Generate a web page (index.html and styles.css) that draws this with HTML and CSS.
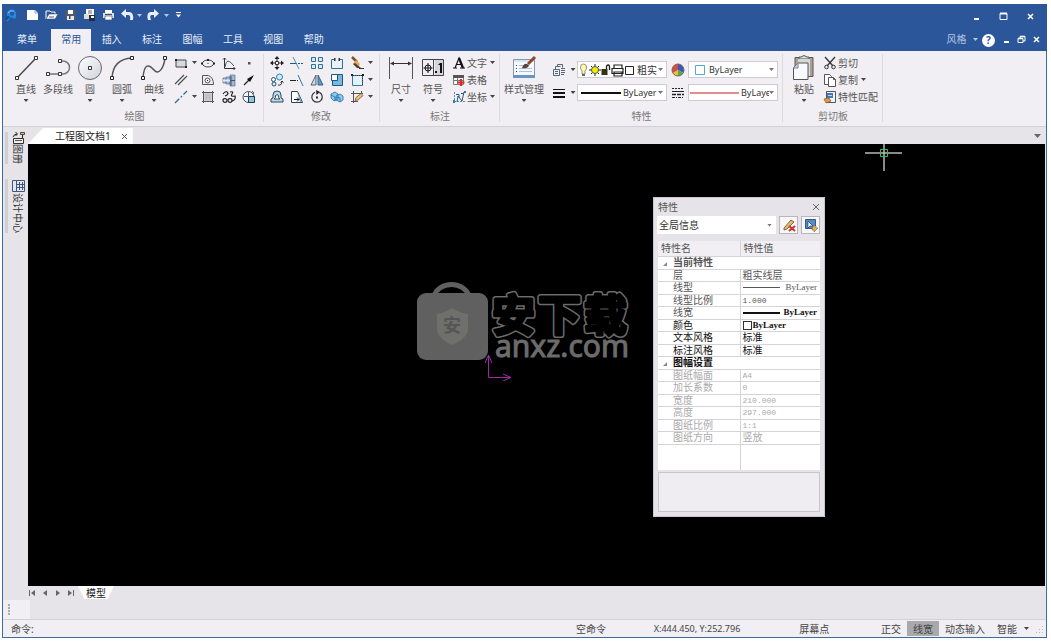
FILE: index.html
```html
<!DOCTYPE html>
<html lang="zh-CN">
<head>
<meta charset="utf-8">
<title>工程图文档1</title>
<link rel="stylesheet" href="styles.css">
</head>
<body>
<div class="window">
<header class="titlebar">
  <div class="title-row">
    <div class="quick">
      <svg class="app-logo" width="13" height="13" viewBox="0 0 13 13"><path d="M2 6a4.500 4.500 0 0 1 9-2v5a4.500 4.500 0 0 1-5-1L3 12H1l2-3z" fill="#2489df"/><circle cx="7" cy="4.500" r="2.200" fill="#2b579a"/><path d="M3 4q2-3 6-2" fill="none" stroke="#7fc9ff"/><path d="M1 9l3-2M1 11l4-3" stroke="#0b3f8d"/></svg>
      <button aria-label="新建"><svg width="13" height="12"><path d="M1 1h8l3 3v7H1z" fill="#fff"/><path d="M9 1v3h3" fill="none" stroke="#8fa2c0"/></svg></button>
      <button aria-label="打开"><svg width="13" height="12"><path d="M1 10V2h4l1 1h4v2" fill="none" stroke="#fff"/><path d="M1 10l3-5h9l-3 5z" fill="#fff" stroke="#39475f" stroke-width=".5"/><path d="M4 8h5" stroke="#557"/></svg></button>
      <button aria-label="保存"><svg width="13" height="12"><path d="M1.500 1h10v10h-10z" fill="#555b66"/><path d="M4 1h5v4H4z" fill="#fff"/><path d="M3 7h7v4H3z" fill="#e8e8e8"/><path d="M5 7h1.500v3H5z" fill="#444"/></svg></button>
      <button aria-label="打印预览"><svg width="13" height="12"><path d="M3 0h8v7H3z" fill="#fff"/><path d="M1 5h5v5H1z" fill="#ddd"/><path d="M5 2h4M5 4h4" stroke="#667"/><path d="M6 6h6v6H6z" fill="#222d40"/><path d="M8 7h3v2H8z" fill="#fff"/></svg></button>
      <button aria-label="打印"><svg width="13" height="12"><path d="M3 1h7v3H3z" fill="#fff"/><path d="M1 4h11v5H1z" fill="#d9dfea"/><path d="M3 7h7v4H3z" fill="#fff" stroke="#39475f" stroke-width=".6"/><path d="M3 5.500h7" stroke="#39475f"/></svg></button>
      <button aria-label="撤销"><svg width="14" height="12"><path d="M0 4.500L5 0v3h3q5 0 4 8H9q1-5-2-5H5v3z" fill="#e8eefb"/></svg></button>
      <svg class="mini" width="5" height="3"><path d="M0 0h5l-2.500 3z"/></svg>
      <button class="redo" aria-label="重做"><svg width="14" height="12"><path d="M13 4.500L8 0v3H5Q0 3 2 11h3Q3 6 6 6h2v3z" fill="#e8eefb"/></svg></button>
      <svg class="mini" width="5" height="3"><path d="M0 0h5l-2.500 3z"/></svg>
      <button aria-label="自定义快速访问栏" class="narrow"><svg width="5" height="6"><path d="M0 0h5v1H0zM0 2.500h5L2.500 5.500z" fill="#fff"/></svg></button>
    </div>
    <div class="win-buttons">
      <button aria-label="最小化"><svg width="9" height="9"><path d="M2 7h5" stroke="#fff" stroke-width="2"/></svg></button>
      <button aria-label="最大化"><svg width="9" height="9"><path d="M1 1.500h7v6H1z" fill="none" stroke="#fff"/><path d="M1 1.500h7" stroke="#fff" stroke-width="2"/></svg></button>
      <button aria-label="关闭"><svg width="9" height="9"><path d="M2 2l5 5M7 2l-5 5" stroke="#fff" stroke-width="1.500"/></svg></button>
    </div>
  </div>
  <div class="tab-row">
    <button class="file-tab">菜单</button>
    <nav class="tabs">
      <button class="active">常用</button><button>插入</button><button>标注</button><button>图幅</button><button>工具</button><button>视图</button><button>帮助</button>
    </nav>
    <div class="doc-buttons">
      <button class="style-btn">风格<svg class="mini" width="5" height="3"><path d="M0 0h5l-2.500 3z"/></svg></button>
      <button class="help" aria-label="帮助主题">?</button>
      <button aria-label="最小化文档"><svg width="9" height="9"><path d="M2 7h5" stroke="#fff" stroke-width="2"/></svg></button>
      <button aria-label="还原文档"><svg width="9" height="9" fill="none" stroke="#fff"><path d="M3 3V1.500h5V6H6"/><path d="M1 3.500h5v4H1z"/><path d="M3 1.500h5M1 3.500h5" stroke-width="1.600"/></svg></button>
      <button aria-label="关闭文档"><svg width="9" height="9"><path d="M2 2l5 5M7 2l-5 5" stroke="#fff" stroke-width="1.500"/></svg></button>
    </div>
  </div>
</header>

<section class="ribbon">
  <div class="group">
    <div class="group-body">
      <button class="big"><svg width="26" height="27" fill="none"><path d="M4 24L23 4" stroke="#4a4a4a" stroke-width="1.500"/><path d="M2.500 22.500h3v3h-3zM21.500 2.500h3v3h-3z" fill="#fff" stroke="#333"/></svg><span>直线</span><i class="arr"></i></button>
      <button class="big"><svg width="26" height="27" fill="none"><path d="M14 7h4a6.500 6.500 0 0 1 0 13H4" stroke="#777" stroke-width="1.500"/><path d="M1.500 18.500h3v3h-3zM13.500 18.500h3v3h-3zM13.500 5.500h3v3h-3z" fill="#fff" stroke="#333"/></svg><span>多段线</span></button>
      <button class="big"><svg width="26" height="27"><defs><linearGradient id="ball" x2="1" y2="1"><stop stop-color="#fff"/><stop offset="1" stop-color="#ccd3dc"/></linearGradient></defs><circle cx="13" cy="14" r="11.500" fill="url(#ball)" stroke="#666"/><path d="M11.500 12.500h3v3h-3z" fill="#fff" stroke="#333"/></svg><span>圆</span><i class="arr"></i></button>
      <button class="big"><svg width="26" height="27" fill="none"><path d="M3 24Q4 5 23 4" stroke="#555" stroke-width="1.500"/><path d="M1.500 22.500h3v3h-3zM21.500 2.500h3v3h-3z" fill="#fff" stroke="#222"/></svg><span>圆弧</span><i class="arr"></i></button>
      <button class="big"><svg width="26" height="27" fill="none"><path d="M2 24C3 9 8 10 13 16S23 13 24 4" stroke="#555" stroke-width="1.500"/><path d="M.5 22.500h3v3h-3zM22.500 2.500h3v3h-3z" fill="#fff" stroke="#222"/></svg><span>曲线</span><i class="arr"></i></button>
      <div class="icons draw-icons">
        <button aria-label="矩形"><svg width="14" height="14"><path d="M2 4h10v7H2z" fill="#d5dbe3" stroke="#444"/><path d="M1 3h2v2H1zM11 10h2v2h-2z" fill="#222"/></svg></button><i class="arr"></i>
        <button aria-label="椭圆"><svg width="14" height="14"><ellipse cx="7" cy="7.500" rx="5.500" ry="3.500" fill="#eef1f5" stroke="#444"/><path d="M6 3h2v2H6zM0 6.500h2v2H0zM12 6.500h2v2h-2zM6.500 7h1v1h-1z" fill="#222"/></svg></button>
        <button aria-label="坐标曲线"><svg width="14" height="14" fill="none"><path d="M2.500 2v10.500H13" stroke="#333"/><path d="M3 11q1-6 3-6 2 0 6 5" stroke="#456"/><path d="M1 3.500L2.500 2 4 3.500M11.500 11l1.500 1.500-1.500 1.500" stroke="#333"/></svg></button>
        <button aria-label="点"><svg width="14" height="14"><path d="M6 6h2.500v2.500H6z" fill="#555"/></svg></button>

        <button aria-label="平行线"><svg width="14" height="14"><path d="M1 11L10 2M4 12L13 3" stroke="#4b5058" stroke-width="1.200"/></svg></button><i></i>
        <button aria-label="轮廓"><svg width="14" height="14" fill="none"><path d="M1.500 2.500h6q5 2 5 9h-11z" stroke="#555"/><circle cx="6.500" cy="7.500" r="2.500" stroke="#555"/><path d="M6 7h1v1H6z" fill="#222"/></svg></button>
        <button aria-label="轴"><svg width="14" height="14"><path d="M1 5h3v5H1zM4 4h4v7H4zM8 2h5v11H8z" fill="#9db9d8" stroke="#5f7087" stroke-width=".7"/><path d="M1 7.500h7" stroke="#dfe9f3" stroke-width="2"/><path d="M8 7.500h5M9 3v10" stroke="#456"/></svg></button>
        <button aria-label="箭头"><svg width="14" height="14"><path d="M2 12l6-6" stroke="#222" stroke-width="1.300"/><path d="M12 2L5 6l3 3z" fill="#111"/></svg></button>

        <button aria-label="中心线"><svg width="14" height="14"><path d="M1 13L13 1" stroke="#25718f" stroke-width="1.300" stroke-dasharray="6 2 2 2"/></svg></button><i class="arr"></i>
        <button aria-label="填充"><svg width="14" height="14"><path d="M3 3h8v8H3z" fill="#dfe2e6"/><path d="M2.500 1v12M11.500 1v12M1 2.500h12M1 11.500h12" stroke="#555"/><path d="M5 3v8M7 3v8M9 3v8M3 5h8M3 7h8M3 9h8" stroke="#999" stroke-width=".5"/></svg></button>
        <button aria-label="波浪线"><svg width="14" height="14" fill="none" stroke="#222" stroke-width="1.200"><path d="M1 4q3-4 5-1 0 2-3 3M8 2q4-1 2 2t3 2q1 4-3 5"/><ellipse cx="3" cy="10.500" rx="2" ry="1.800"/><ellipse cx="8" cy="10.500" rx="2" ry="1.800"/></svg></button>
        <button aria-label="局部放大"><svg width="14" height="14"><circle cx="6.500" cy="7" r="5.500" fill="#f5f6fa" stroke="#456"/><path d="M6.500 6.500h6v6h-6z" fill="#8ec4e0" stroke="#234"/><path d="M6.500 2v4.500H2M10 1l2 2-2 1" fill="none" stroke="#456"/></svg></button>
      </div>
    </div>
    <div class="group-title">绘图</div>
  </div>

  <div class="group edit">
    <div class="group-body">
      <div class="icons edit-icons">
        <button aria-label="平移"><svg width="14" height="14"><path d="M7 1v12M1 7h12" stroke="#222"/><path d="M7 0l2.500 3h-5zM7 14l2.500-3h-5zM0 7l3-2.500v5zM14 7l-3-2.500v5z" fill="#222"/><path d="M5.500 5.500h3v3h-3z" fill="#fff" stroke="#333"/></svg></button>
        <button aria-label="裁剪"><svg width="14" height="14"><path d="M0 7.500h7" stroke="#258"/><path d="M8 7.500h6" stroke="#258" stroke-dasharray="2 1"/><path d="M3 1l6 12" stroke="#4b8ab8"/></svg></button>
        <button aria-label="阵列"><svg width="14" height="14" fill="#d4ebfa" stroke="#2f7096"><path d="M1.500 1.500h4v4h-4zM8.500 1.500h4v4h-4zM1.500 8.500h4v4h-4zM8.500 8.500h4v4h-4z"/></svg></button>
        <button aria-label="拉伸"><svg width="14" height="14"><path d="M1.500 3.500h11v9h-11z" fill="#e8f2f9" stroke="#2f7096"/><path d="M5 3.500h4" stroke="#f1eff3" stroke-width="2"/><path d="M4 2h1.500v3H4zM8.500 2H10v3H8.500z" fill="#333"/></svg></button>
        <button aria-label="删除"><svg width="14" height="14"><path d="M2 1l5 5" stroke="#7d5130" stroke-width="2.500"/><path d="M6 4l4 4-2 3-5-3z" fill="#e9a552"/><path d="M5 7l6 5H7L3 8z" fill="#50402f"/><path d="M9 12.500h5" stroke="#333"/></svg></button>
        <i class="arr"></i>

        <button aria-label="复制对象"><svg width="14" height="14"><circle cx="9.500" cy="4" r="3" fill="#d4ebfa" stroke="#2f80b6"/><circle cx="3.500" cy="6.500" r="2" fill="#fff" stroke="#257"/><circle cx="4" cy="11" r="2" fill="#d4ebfa" stroke="#257"/><path d="M8 12q4 1 4-4M10.500 9.500L12 8l1.500 1.500" fill="none" stroke="#333"/></svg></button>
        <button aria-label="延伸"><svg width="14" height="14"><path d="M0 7.500h5" stroke="#222"/><path d="M5 7.500h4" stroke="#222" stroke-dasharray="1 1"/><path d="M8 2l5 11" stroke="#36759f"/></svg></button>
        <button aria-label="镜像"><svg width="14" height="14"><path d="M6 2v10H1z" fill="#cfd9e2" stroke="#345" stroke-width=".8"/><path d="M8 2v10h5z" fill="#4ba3dc" stroke="#345" stroke-width=".8"/></svg></button>
        <button aria-label="缩放"><svg width="14" height="14"><path d="M2.500 1.500h10v11h-10z" fill="#76b9e6" stroke="#257"/><path d="M1.500 1.500h6v6h-6z" fill="#fff" stroke="#257"/></svg></button>
        <button aria-label="打断"><svg width="14" height="14"><path d="M2.500 2.500h10v10h-10z" fill="#e5f1f8" stroke="#357a9f"/><path d="M3 2.500h9M12.500 3v9" stroke="#333" stroke-dasharray="1 1"/><path d="M1 1h2v2H1zM12 1h2v2h-2z" fill="#222"/></svg></button>
        <i class="arr"></i>

        <button aria-label="偏移"><svg width="14" height="14"><path d="M1 12V9q3 0 2-4a4 4 0 0 1 8 0q-1 4 2 4v3z" fill="#b8dcf2" stroke="#345"/><path d="M4 9q2-1 1.500-3.500a2 2 0 0 1 3 0Q8 8 10 9z" fill="#fff" stroke="#345"/></svg></button>
        <button aria-label="拔模"><svg width="14" height="14"><path d="M1.500 1.500h6l5 11h-11z" fill="#fff" stroke="#345"/><path d="M7 2l5 10h-2z" fill="#58b0e8"/><path d="M4 9.500h5M7 7.500l2 2-2 2" fill="none" stroke="#111"/></svg></button>
        <button aria-label="旋转"><svg width="14" height="14"><path d="M5 2.200a5.200 5.200 0 1 0 4.500.2" fill="none" stroke="#333" stroke-width="1.200"/><path d="M6 0l4 2-3.500 3z" fill="#222"/><path d="M6 6.500h2v2H6z" fill="#222"/></svg></button>
        <button aria-label="分解"><svg width="14" height="14" fill="#8ccaf2" stroke="#246d9d" stroke-width=".8"><path d="M1 4l4-2 3 2v5l-4 2-3-3zM6 6l4-2 3 2v4l-3 2-4-2zM1 5l4 2v4M6 7l4 1v4"/></svg></button>
        <button aria-label="编辑"><svg width="14" height="14"><path d="M3.500 1v12M1 3.500h12M11.500 1v6M1 11.500h7" stroke="#555"/><path d="M5 10.500l1-3 5-4 2 2-5 4.500z" fill="#f0c26d" stroke="#754" stroke-width=".8"/></svg></button>
        <i class="arr"></i>
      </div>
    </div>
    <div class="group-title">修改</div>
  </div>

  <div class="group">
    <div class="group-body">
      <button class="big"><svg width="26" height="27" fill="none"><path d="M1.500 3v22M24.500 3v22" stroke="#555"/><path d="M3 9.500h20" stroke="#333"/><path d="M2 9.500l4-2v4zM24 9.500l-4-2v4z" fill="#333"/></svg><span>尺寸</span><i class="arr"></i></button>
      <button class="big"><svg width="26" height="27" fill="none"><path d="M15 6h9v16h-9z" fill="#d4d6da"/><path d="M2.500 5.500h21v16h-21zM13.500 6v16" stroke="#444"/><circle cx="8" cy="14" r="3" stroke="#111"/><path d="M8 9v10M3.500 14h9" stroke="#111"/><path d="M15 17h2v2h-2zM20 9h2v10h-2zM18 11l2-2h1v2z" fill="#111"/></svg><span>符号</span><i class="arr"></i></button>
      <div class="list">
        <button><svg width="14" height="14"><path d="M1 12h4M8 12h5M3 12L7 2l4 10M4.500 8.500h5" fill="none" stroke="#111" stroke-width="1.200"/><path d="M7 2l4 10" stroke="#111" stroke-width="2.200"/></svg>文字<i class="arr"></i></button>
        <button><svg width="14" height="14"><path d="M1.500 2.500h10v9h-10zM1 7.500h11M5.500 4v8" fill="#fff" stroke="#777"/><path d="M1 2h11v3H1z" fill="#555"/><path d="M9 6v7M5.500 9.500h7" stroke="#d52b2b" stroke-width="2.200"/></svg>表格</button>
        <button><svg width="14" height="14"><path d="M2.500 2v9.500H13" fill="none" stroke="#4a93bd" stroke-dasharray="2 1"/><path d="M5 12l1-6 4 5 2-9M4 4.500h3v3M9 3.500h3" fill="none" stroke="#357"/><path d="M1 10h2v3H1zM12 1h2v2h-2z" fill="#267db4"/></svg>坐标<i class="arr"></i></button>
      </div>
    </div>
    <div class="group-title">标注</div>
  </div>

  <div class="group">
    <div class="group-body">
      <button class="big wide"><svg width="28" height="27"><path d="M3.500 5.500h21v18h-21z" fill="#f5f8fc" stroke="#8a96a5"/><path d="M3 21h22v3H3z" fill="#6795c8"/><path d="M4 6h20v2H4z" fill="#d6e4f3"/><path d="M9 11.500h8M9 14.500h13M9 17.500h13" stroke="#a9c3df"/><path d="M6 11.500h1M6 14.500h1M6 17.500h1" stroke="#346"/><path d="M12 14q2-5 5-4l2 1q-1 4-7 3z" fill="#594339"/><path d="M18 10l7-7" stroke="#8b4b28" stroke-width="3"/></svg><span>样式管理</span><i class="arr"></i></button>
      <div class="props">
        <div class="prop-row">
          <button class="drop" aria-label="图层"><svg width="14" height="14" fill="#eef2f7" stroke="#567"><path d="M5.500 3.500v-2h5v3M3.500 6.500v-3h5"/><path d="M1.500 6.500h6v6h-6z"/><path d="M3 8.500h3M3 10.500h3M9 5.500h4M9 7.500h4M9 9.500h4M9 11.500h3"/></svg><i class="arr"></i></button>
          <div class="combo">
            <svg width="57" height="14"><path d="M4 8Q2 6 2.500 4a3 3 0 0 1 6 0Q9 6 7 8v3H4z" fill="#fff8a8" stroke="#777" stroke-width=".8"/><path d="M4 11h3v2H4z" fill="#665"/><path d="M17 1v12M11 7h12M13 3l8 8M21 3l-8 8" stroke="#222"/><circle cx="17" cy="7" r="3.500" fill="#f4f000" stroke="#555"/><path d="M23.500 6h6v6h-6z" fill="#333311"/><path d="M28.500 6V3q2-2 3 0v4" fill="none" stroke="#222" stroke-width="1.300"/><path d="M36 5V2h8v3M34 5.500h11v5H34zM36 9h8v4h-8z" fill="#fff" stroke="#222" stroke-width="1.200"/><path d="M47.500 3.500h8v8h-8z" fill="#fff" stroke="#222"/></svg>
            <select aria-label="当前图层"><option>粗实</option></select><i class="arr"></i>
          </div>
          <button class="single" aria-label="颜色"><svg width="14" height="14"><path d="M7 7V1a6 6 0 0 1 5.200 9z" fill="#3c55c0"/><path d="M7 7l5.200 3a6 6 0 0 1-10.400 0z" fill="#e6c42a"/><path d="M7 7l-5.200 3A6 6 0 0 1 7 1z" fill="#da4c42"/><path d="M7 7v6a6 6 0 0 0 5.200-3z" fill="#4fa95a"/><circle cx="7" cy="7" r="6" fill="none" stroke="#765"/></svg></button>
          <div class="combo">
            <svg width="18" height="14"><path d="M6.500 2.500h9v9h-9z" fill="#fff" stroke="#55a6dc"/></svg>
            <select class="latin" aria-label="当前颜色"><option>ByLayer</option></select><i class="arr"></i>
          </div>
        </div>
        <div class="prop-row">
          <button class="drop" aria-label="线宽"><svg width="14" height="14"><path d="M1 3.500h12" stroke="#111"/><path d="M1 7h12" stroke="#111" stroke-width="2"/><path d="M1 11h12" stroke="#111" stroke-width="2"/></svg><i class="arr"></i></button>
          <div class="combo">
            <svg width="43" height="14"><path d="M3 7h40" stroke="#111" stroke-width="2"/></svg>
            <select class="latin" aria-label="当前线宽"><option>ByLayer</option></select><i class="arr"></i>
          </div>
          <button class="single" aria-label="线型"><svg width="14" height="14" stroke="#222"><path d="M1 2.500h12" stroke-dasharray="2 1"/><path d="M1 5.500h12"/><path d="M1 8.500h12" stroke-dasharray="4 1" stroke-width="1.500"/><path d="M1 11.500h12" stroke-dasharray="3 1 1 1"/></svg></button>
          <div class="combo">
            <svg width="50" height="14"><path d="M1 7h49" stroke="#e58a8e" stroke-width="2"/></svg>
            <select class="latin" aria-label="当前线型"><option>ByLayer</option></select><i class="arr"></i>
          </div>
        </div>
      </div>
    </div>
    <div class="group-title">特性</div>
  </div>

  <div class="group">
    <div class="group-body">
      <button class="big"><svg width="26" height="27"><path d="M4 3.500h18v19H4z" fill="#aaa098" stroke="#5d5650"/><path d="M8 5V3h2q3-3 6 0h2v2z" fill="#ddd" stroke="#555"/><path d="M7 5h12v17H7z" fill="#d7d7d7"/><path d="M7 9h10v16.500H2.500V14z" fill="#f7f9fc" stroke="#555"/><path d="M7 9v5H3" fill="#cbd5e3" stroke="#789"/></svg><span>粘贴</span><i class="arr"></i></button>
      <div class="list">
        <button><svg width="14" height="14" fill="none" stroke="#333"><path d="M2 1l8 9M12 1L4 10" stroke-width="1.300"/><circle cx="3.500" cy="11" r="1.800"/><circle cx="10.500" cy="11" r="1.800"/></svg>剪切</button>
        <button><svg width="14" height="14" fill="#fff" stroke="#555"><path d="M1.500 1.500h5l2 2v8h-7z"/><path d="M5.500 4.500h5l2 2v7h-7zM10.500 4.500v2h2"/></svg>复制<i class="arr"></i></button>
        <button><svg width="14" height="14"><path d="M3.500 1.500h9v11h-9z" fill="#eef3f8" stroke="#555"/><path d="M4 3h6v5H4z" fill="#3f78bd"/><path d="M5 5.500h4" stroke="#bfd5ee"/><path d="M1 9l5-1 2 3-5 2z" fill="#e59a40" stroke="#8c5628" stroke-width=".7"/></svg>特性匹配</button>
      </div>
    </div>
    <div class="group-title">剪切板</div>
  </div>
</section>

<main class="workspace">
  <aside class="dock">
    <button><svg width="13" height="12"><path d="M1.500 6.500h10v5h-10z" fill="#eee" stroke="#333"/><path d="M3 8.500h7" stroke="#555"/><path d="M1 5q1-3 4-3M3.500 0l2 2-2 2M10.500 2v4" fill="none" stroke="#222"/><path d="M8.500.500h4v2h-4z" fill="#ddd46b" stroke="#444"/></svg><span>图册</span></button>
    <button><svg width="13" height="14"><path d="M.5 1.500h12v11H.5z" fill="#dfe7f4" stroke="#44577b"/><path d="M4.500 1v12M7.500 3v8M10.500 3v8M5 5.500h7M5 8.500h7" stroke="#44577b"/></svg><span>设计中心</span></button>
  </aside>
  <div class="document">
    <div class="doc-tabs">
      <div class="doc-tab"><span>工程图文档1</span><button aria-label="关闭工程图文档1"><svg width="7" height="7"><path d="M1 1l5 5M6 1L1 6" stroke="#555"/></svg></button></div>
      <button class="more" aria-label="文档列表"><i class="arr large"></i></button>
    </div>
    <div class="canvas">
      <svg class="cross" width="39" height="28" fill="none"><path d="M1 9h37" stroke="#b8b8b8" stroke-width="1.500"/><path d="M20 0v27" stroke="#b8b8b8" stroke-width="1.500"/><path d="M16.500 5.500h7v7h-7z" stroke="#2fbd70"/></svg>
      <svg class="watermark" width="230" height="96">
        <path d="M19 20a18 15 0 0 1 35 0" fill="none" stroke="#606060" stroke-width="5"/>
        <rect x="2" y="17" width="71" height="67" rx="9" fill="#606060"/>
        <path d="M37 32q7 5 16 6v15q0 9-16 16Q22 62 22 53V38q8-1 15-6z" fill="#6f6f6c"/>
        <text class="wm-badge" x="37" y="56">安</text>
        <g class="wm-outline"><text id="wm-name" class="wm-name" y="55" x="77 123 169">安下载</text></g>
        <use class="wm-core" href="#wm-name"/>
        <text class="wm-site" x="80" y="81">anxz.com</text>
      </svg>
      <svg class="axis" width="28" height="28"><path d="M3.500 2v22.500H26M0 10l3.500-8L7 10M18 21l8 3.500-8 3.500" fill="none" stroke="#a028a8"/></svg>

      <section class="panel">
        <div class="panel-head"><h2>特性</h2><button aria-label="关闭特性"><svg width="8" height="8"><path d="M1 1l6 6M7 1L1 7" stroke="#666"/></svg></button></div>
        <div class="panel-tools">
          <div class="panel-combo"><select aria-label="信息范围"><option>全局信息</option></select><i class="arr"></i></div>
          <button class="tool" aria-label="清除选择"><svg width="14" height="14"><path d="M2 10L9 2l3 2-7 7-3 1z" fill="#edb75e" stroke="#765"/><path d="M7 8l6 5M13 8l-6 5" stroke="#c8342d" stroke-width="2"/></svg></button>
          <button class="tool" aria-label="快速选择"><svg width="14" height="14"><path d="M1.500 1.500h10v9h-10z" fill="#4a8fd0" stroke="#456"/><path d="M4 3l5 5H6l-2 2z" fill="#fff" stroke="#124" stroke-width=".6"/><path d="M9 8h3v2h2l-4 4v-2H8z" fill="#e6b44d" stroke="#865" stroke-width=".6"/></svg></button>
        </div>
        <table class="grid">
          <thead><tr><th>特性名</th><th>特性值</th></tr></thead>
          <tbody>
            <tr class="cat"><td colspan="2"><i class="fold"></i>当前特性</td></tr>
            <tr><td>层</td><td>粗实线层</td></tr>
            <tr><td>线型</td><td><span class="sample"><i></i>ByLayer</span></td></tr>
            <tr><td>线型比例</td><td class="num">1.000</td></tr>
            <tr><td>线宽</td><td><span class="sample heavy"><i></i>ByLayer</span></td></tr>
            <tr class="dark"><td>颜色</td><td><span class="swatch"><i></i>ByLayer</span></td></tr>
            <tr class="dark"><td>文本风格</td><td>标准</td></tr>
            <tr class="dark"><td>标注风格</td><td>标准</td></tr>
            <tr class="cat strong"><td colspan="2"><i class="fold"></i>图幅设置</td></tr>
            <tr class="off"><td>图纸幅面</td><td class="num">A4</td></tr>
            <tr class="off"><td>加长系数</td><td class="num">0</td></tr>
            <tr class="off"><td>宽度</td><td class="num">210.000</td></tr>
            <tr class="off"><td>高度</td><td class="num">297.000</td></tr>
            <tr class="off"><td>图纸比例</td><td class="num">1:1</td></tr>
            <tr class="off"><td>图纸方向</td><td>竖放</td></tr>
            <tr class="blank"><td></td><td></td></tr>
          </tbody>
        </table>
        <div class="panel-note"></div>
      </section>
    </div>
    <div class="sheet-tabs">
      <button aria-label="第一页"><svg width="6" height="6"><path d="M0 0h1v6H0zM6 0v6L2 3z"/></svg></button>
      <button aria-label="上一页"><svg width="6" height="6"><path d="M5 0v6L1 3z"/></svg></button>
      <button aria-label="下一页"><svg width="6" height="6"><path d="M1 0v6l4-3z"/></svg></button>
      <button aria-label="最后一页"><svg width="6" height="6"><path d="M5 0h1v6H5zM0 0v6l4-3z"/></svg></button>
      <button class="model">模型</button>
    </div>
  </div>
</main>
<div class="command"><div class="grip"><svg width="2" height="12" fill="#aaa"><path d="M0 0h2v2H0zM0 3h2v2H0zM0 6h2v2H0zM0 9h2v2H0z"/></svg></div></div>
<footer class="status">
  <span class="prompt">命令:</span>
  <span class="idle">空命令</span>
  <span class="coords latin">X:444.450, Y:252.796</span>
  <span class="snap">屏幕点</span>
  <button>正交</button><button class="on">线宽</button><button>动态输入</button><button>智能<i class="arr"></i></button>
  <svg class="resize" width="9" height="9" fill="#bbb"><path d="M6 0h1v1H6zM3 3h1v1H3zM6 3h1v1H6zM0 6h1v1H0zM3 6h1v1H3zM6 6h1v1H6z"/></svg>
</footer>
</div>
</body>
</html>
```
FILE: styles.css
```css
* { box-sizing: border-box; }
html, body { height: 100%; }
body {
  margin: 0;
  padding: 4px 4px 5px 2px;
  background: #fff;
  color: #555;
  font: 10px/12px "Noto Sans", "Noto Sans CJK SC", sans-serif;
}
button, select {
  margin: 0;
  padding: 0;
  border: 0;
  background: none;
  color: inherit;
  font: inherit;
}
button { display: flex; align-items: center; justify-content: center; white-space: nowrap; }
svg { display: block; flex: none; }

.window {
  display: flex;
  flex-direction: column;
  height: 100%;
  border: 1px solid #3a6ea0;
  border-top: 0;
  background: #e6e4e8;
}
.latin { font-size: 9px; }
.arr {
  flex: none;
  width: 5px;
  height: 3px;
  background: #444;
  clip-path: polygon(0 0, 100% 0, 50% 100%);
}
.arr.large { width: 7px; height: 4px; background: #666; }
.mini { fill: #b8c8e4; }

.titlebar { background: #2b579a; color: #e8eefb; margin: 0 -1px; padding: 0 1px; }
.title-row, .tab-row { display: flex; justify-content: space-between; }
.title-row { height: 25px; }
.quick { display: flex; align-items: center; height: 22px; padding-left: 2px; }
.quick .app-logo { margin-right: 5px; }
.quick button { width: 19px; height: 20px; }
.quick .redo { width: 22px; }
.quick .narrow { width: 18px; }
.win-buttons { display: flex; align-items: center; padding-right: 2px; }
.win-buttons button { width: 27px; height: 24px; }
.tab-row { height: 22px; }
.tab-row button { height: 22px; padding-bottom: 2px; }
.file-tab { width: 48px; }
.tabs { display: grid; grid-template-columns: repeat(7, 1fr); width: 283px; }
.tabs .active { background: #f1eff3; color: #2b579a; }
.doc-buttons { display: flex; align-items: center; margin-left: auto; padding-right: 2px; }
.doc-buttons button { width: 15px; }
.doc-buttons .style-btn { width: 32px; gap: 6px; color: #b3c4e2; }
.doc-buttons .help {
  width: 13px;
  height: 13px;
  margin: 0 4px;
  padding: 0;
  border-radius: 50%;
  background: #fff;
  color: #2b579a;
  font-weight: 700;
}

.ribbon {
  display: flex;
  padding: 3px 3px 4px 2px;
  border-bottom: 1px solid #d2d0d5;
  background: #f1eff3;
}
.group { border-right: 1px solid #dcdadf; padding: 0 4px 0 5px; }
.group.edit { padding-left: 3px; }
.group-body { display: flex; height: 55px; }
.group-title { padding-top: 1px; text-align: center; color: #777; }
.big {
  flex-direction: column;
  justify-content: flex-start;
  width: 32px;
  height: 52px;
}
.big span { margin-top: 2px; }
.big .arr { margin-top: 4px; }
.big.wide { width: 38px; }
.icons { display: grid; grid-auto-rows: 17px; align-items: center; }
.icons button { height: 17px; }
.draw-icons { grid-template-columns: 20px 6px 22px 20px 20px; padding-left: 1px; }
.edit-icons { grid-template-columns: repeat(5, 20px) 8px; }
.icons .arr { margin-left: 1px; }
.list { display: flex; flex-direction: column; padding-left: 3px; }
.list button { justify-content: flex-start; height: 17px; gap: 1px; }
.list .arr { margin-left: 2px; }
.props { display: flex; flex-direction: column; gap: 6px; padding: 7px 0 0 7px; }
.prop-row { display: flex; align-items: center; }
.drop { width: 27px; gap: 5px; }
.drop, .single { height: 17px; }
.single { width: 21px; }
.combo, .panel-combo {
  display: flex;
  align-items: center;
  padding-right: 3px;
  background: #fff;
}
.combo { width: 90px; height: 17px; border: 1px solid #cdcbd0; }
.combo select, .panel-combo select {
  flex: 1;
  min-width: 0;
  appearance: none;
  padding-left: 2px;
  overflow: hidden;
  color: #333;
}
.combo .arr, .panel-combo .arr { background: #777; pointer-events: none; }

.workspace { display: flex; flex: 1; min-height: 0; }
.dock { display: flex; flex-direction: column; gap: 15px; width: 25px; padding: 5px 0 0 2px; }
.dock button {
  flex-direction: column;
  justify-content: flex-start;
  width: 21px;
  padding-left: 2px;
  border-left: 3px solid #d0cfd4;
}
.dock span { writing-mode: vertical-rl; text-orientation: sideways; color: #333; }
.document { display: flex; flex: 1; flex-direction: column; min-width: 0; padding-right: 1px; }
.doc-tabs { display: flex; justify-content: space-between; height: 17px; padding-top: 1px; }
.doc-tab {
  display: flex;
  align-items: center;
  gap: 10px;
  height: 16px;
  padding: 0 5px 0 27px;
  background: #fff;
  clip-path: polygon(15px 0, 100% 0, 100% 100%, 0 100%);
  color: #222;
}
.more { padding: 0 4px; }

.canvas { position: relative; flex: 1; background: #000; }
.cross { position: absolute; left: 836px; top: 0; }
.watermark { position: absolute; left: 387px; top: 132px; }
.wm-badge { fill: #555; font-size: 18px; font-weight: 700; text-anchor: middle; }
.wm-name { font: 700 43px "Noto Sans CJK SC", sans-serif; stroke-linejoin: round; }
.wm-outline { fill: #6c6c6c; stroke: #6c6c6c; stroke-width: 6px; }
.wm-core { fill: #000; stroke: #000; stroke-width: 3px; }
.wm-site { fill: #6c6c6c; stroke: #6c6c6c; stroke-width: 1px; font: 30px "Noto Sans", sans-serif; }
.axis { position: absolute; left: 457px; top: 209px; }

.panel {
  position: absolute;
  left: 625px;
  top: 53px;
  width: 172px;
  padding: 0 4px 4px;
  border: 1px solid #c8c6ca;
  background: #e6e4e8;
}
.panel-head { display: flex; align-items: center; justify-content: space-between; height: 18px; }
.panel-head h2 { margin: 0; font-size: 10px; font-weight: 400; }
.panel-tools { display: flex; gap: 3px; margin-bottom: 7px; }
.panel-combo { flex: 1; height: 18px; padding-right: 4px; margin-left: -1px; }
.tool { width: 19px; height: 18px; border: 1px solid #b8b6ba; background: #f7f6f8; }
.grid {
  width: 100%;
  border-collapse: collapse;
  table-layout: fixed;
  background: #fff;
  color: #555;
}
.grid th, .grid td {
  height: 12px;
  padding: 0 3px;
  border: 0 solid #d5d3d7;
  border-bottom-width: 1px;
  line-height: 11px;
  text-align: left;
  font-weight: 400;
  white-space: nowrap;
}
.grid tbody tr:nth-child(odd) td { height: 13px; }
.grid th { height: 15px; background: #f1eff3; }
.grid th:first-child, .grid td:first-child { border-right-width: 1px; }
.grid th:first-child { width: 82px; }
.grid td:first-child { padding-left: 15px; }
.grid td:last-child { padding-left: 2px; }
.grid .cat td { padding-left: 5px; border-right-width: 0; font-weight: 700; }
.grid .strong td, .grid .dark td { color: #111; }
.grid .off td { color: #aaa; }
.grid .num { font-family: "Liberation Mono", monospace; font-size: 8px; }
.grid tbody .blank td { height: 26px; border-bottom-width: 0; }
.fold {
  display: inline-block;
  width: 4px;
  height: 4px;
  margin-right: 6px;
  background: #888;
  clip-path: polygon(100% 0, 100% 100%, 0 100%);
}
.sample, .swatch { display: flex; align-items: center; font-family: "Liberation Serif", serif; font-size: 9px; }
.sample { justify-content: space-between; }
.sample i { width: 37px; border-top: 1px solid #555; }
.heavy { color: #111; font-weight: 700; }
.heavy i { border-top: 2px solid #111; }
.swatch { gap: 1px; font-weight: 700; }
.swatch i { width: 9px; height: 9px; border: 1px solid #333; }
.panel-note { height: 40px; margin-top: 2px; border: 1px solid #c8c6ca; background: #efedf1; }

.sheet-tabs { display: flex; align-items: flex-start; height: 14px; }
.sheet-tabs button { width: 13px; height: 13px; padding-right: 5px; fill: #666; }
.sheet-tabs .model {
  width: 36px;
  margin-left: -2px;
  padding: 0;
  background: #fff;
  clip-path: polygon(0 0, 100% 0, 82% 100%, 18% 100%);
  color: #222;
}
.command { height: 19px; }
.grip { display: flex; align-items: center; width: 27px; height: 19px; padding-left: 5px; background: #f1eff3; }
.status {
  display: flex;
  align-items: center;
  height: 18px;
  padding-left: 8px;
  border-top: 1px solid #d2d0d5;
  background: #f1eff3;
  color: #444;
}
.status button { height: 15px; padding: 0 6px; gap: 7px; }
.prompt { flex: 567; }
.idle { flex: 78; }
.coords { flex: 146; }
.snap { flex: 76; }
.prompt, .idle, .coords, .snap { min-width: 0; white-space: nowrap; }
.status .on { background: #a9a8ab; }
.resize { margin: 4px 1px 0; }
```
